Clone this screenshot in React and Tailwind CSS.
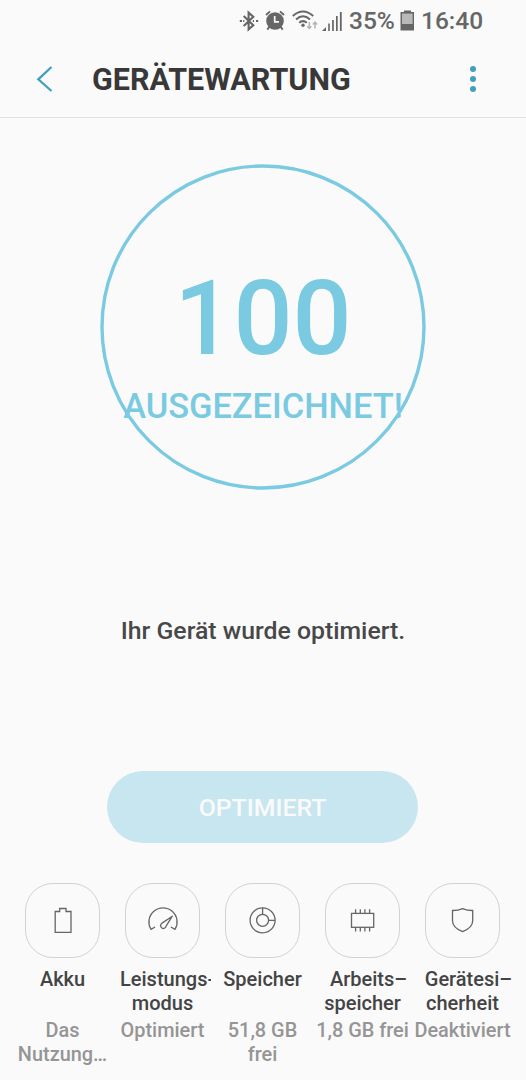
const BluetoothIcon = () => (
  <svg width="20" height="22" viewBox="0 0 20 22" fill="none" stroke="#666" strokeWidth="2.1">
    <path d="M4.7 6 L14.3 15.2 L9.6 19.4 V2.6 L14.3 6.8 L4.7 16" />
    <path d="M0.8 11 H3 M4.2 11 H5.4 M13.8 11 H15 M17 11 H19.2" strokeWidth="2.2" />
  </svg>
);

const AlarmIcon = () => (
  <svg width="20" height="21" viewBox="0 0 20 21">
    <circle cx="10" cy="11" r="8.8" fill="#666" />
    <path
      d="M1 5 L5 1.4 M15 1.4 L19 5 M4.5 16.5 L2.3 19.6 M15.5 16.5 L17.7 19.6"
      stroke="#666"
      strokeWidth="1.9"
      fill="none"
    />
    <path d="M9.7 6 V11.8 H14" stroke="#fafafa" strokeWidth="1.7" fill="none" />
  </svg>
);

const WifiIcon = () => (
  <svg width="27" height="21" viewBox="0 0 27 21" fill="none" stroke="#666" strokeWidth="2">
    <path d="M0.8 6 Q11 -3 21.2 6" />
    <path d="M4 9.4 Q11 3.2 18 9.4" />
    <path d="M7.2 12.8 Q11 9.4 14.8 12.8" />
    <circle cx="11" cy="15.3" r="1.7" fill="#666" stroke="none" />
    <path
      d="M17.3 12 V18.3 M15.2 16.2 L17.3 18.5 L19.4 16.2 M23 18.5 V12.3 M20.9 14.4 L23 12.2 L25.1 14.4"
      stroke="#b4b4b4"
      strokeWidth="1.5"
    />
  </svg>
);

const SignalIcon = () => (
  <svg width="20" height="20" viewBox="0 0 20 20" fill="#666">
    <path d="M0 20 L4 16 V20 Z" />
    <rect x="6.2" y="12.5" width="1.6" height="7.5" />
    <rect x="10.1" y="9" width="1.7" height="11" />
    <rect x="14" y="5" width="1.7" height="15" />
    <rect x="17.9" y="1" width="1.8" height="19" />
  </svg>
);

const BatteryStatusIcon = () => (
  <svg width="15" height="21" viewBox="0 0 15 21">
    <path d="M0.5 2 H4 V0.5 H11 V2 H14 V20.5 H0.5 Z" fill="#666" />
    <rect x="2" y="3.6" width="10.6" height="10.4" fill="#b9b9b9" />
  </svg>
);

const BatteryIcon = () => (
  <svg width="36" height="36" viewBox="0 0 36 36" fill="none" stroke="#666" strokeWidth="1.3">
    <path d="M10.2 9.5 H14.7 V6.5 H21 V9.5 H26 V30.3 H10.2 Z" />
  </svg>
);

const GaugeIcon = () => (
  <svg width="36" height="36" viewBox="0 0 36 36" fill="none" stroke="#666" strokeWidth="1.3" strokeLinecap="round" strokeLinejoin="round">
    <path d="M9.6 25.2 L6 27.4 A14.1 14.1 0 1 1 30 27.4 L26.3 25.2" />
    <path d="M27.3 14.2 L21.1 24.2 A2.8 2.8 0 1 1 16.7 21.4 Z" />
  </svg>
);

const StorageIcon = () => (
  <svg width="36" height="36" viewBox="0 0 36 36" fill="none" stroke="#666" strokeWidth="1.3">
    <circle cx="17.6" cy="18.3" r="12.5" />
    <circle cx="17.6" cy="18.3" r="6" />
    <path d="M17.6 5.8 V12.3 M23.6 18.3 H30.1" />
  </svg>
);

const MemoryIcon = () => (
  <svg width="36" height="36" viewBox="0 0 36 36" fill="none" stroke="#666" strokeWidth="1.3">
    <rect x="6.5" y="11.4" width="22.2" height="13.9" />
    <path d="M10.6 7.2 V11.2 M15.3 7.2 V11.2 M19.9 7.2 V11.2 M24.6 7.2 V11.2 M10.6 25.3 V29.6 M15.3 25.3 V29.6 M19.9 25.3 V29.6 M24.6 25.3 V29.6" />
  </svg>
);

const ShieldIcon = () => (
  <svg width="36" height="36" viewBox="0 0 36 36" fill="none" stroke="#666" strokeWidth="1.3">
    <path d="M17.6 6.6 Q13 8.6 7.5 8.5 V18.8 C7.5 23.8 11.6 27.3 17.6 29.6 C23.6 27.3 27.7 23.8 27.7 18.8 V8.5 Q22.2 8.6 17.6 6.6 Z" />
  </svg>
);

const items = [
  { icon: <BatteryIcon />, title: ["Akku"], info: ["Das", "Nutzung…"] },
  { icon: <GaugeIcon />, title: ["Leistungs-", "modus"], info: ["Optimiert"], clipped: true },
  { icon: <StorageIcon />, title: ["Speicher"], info: ["51,8 GB", "frei"] },
  { icon: <MemoryIcon />, title: ["Arbeits–", "speicher"], info: ["1,8 GB frei"], hanging: true },
  { icon: <ShieldIcon />, title: ["Gerätesi–", "cherheit"], info: ["Deaktiviert"], hanging: true },
];

const StatusBar = () => (
  <div className="flex h-10 items-center pl-[239px] pt-[1px] text-[24.5px] font-medium leading-none text-[#666]">
    <BluetoothIcon />
    <div className="ml-[6px]"><AlarmIcon /></div>
    <div className="ml-[7px]"><WifiIcon /></div>
    <div className="ml-[3px]"><SignalIcon /></div>
    <span className="ml-[7px] w-[46px] whitespace-nowrap pt-[2px]">35%</span>
    <div className="ml-[5px]"><BatteryStatusIcon /></div>
    <span className="ml-[6px] whitespace-nowrap pt-[2px]">16:40</span>
  </div>
);

const Header = () => (
  <header className="flex h-[78px] items-center border-b border-[#e1e1e1]">
    <button className="ml-[36px]" aria-label="Zurück">
      <svg width="18" height="28" viewBox="0 0 18 28" fill="none" stroke="#419fc0" strokeWidth="2.3">
        <path d="M15.5 2 L2.3 14.3 L15.5 26" />
      </svg>
    </button>
    <h1 className="ml-[38px] flex-1 pt-[4px] text-[30.5px] font-bold leading-none text-[#383838]">
      GERÄTEWARTUNG
    </h1>
    <button className="mr-[50px] flex flex-col gap-1" aria-label="Menü">
      <span className="size-[6px] rounded-full bg-[#419fc0]" />
      <span className="size-[6px] rounded-full bg-[#419fc0]" />
      <span className="size-[6px] rounded-full bg-[#419fc0]" />
    </button>
  </header>
);

const Score = () => (
  <div className="mt-[46px] grid h-[326px] place-items-center text-[#7acae1]">
    <svg className="col-start-1 row-start-1" width="326" height="326" viewBox="0 0 326 326">
      <circle cx="163" cy="163" r="161" fill="none" stroke="currentColor" strokeWidth="3.4" />
    </svg>
    <div className="col-start-1 row-start-1 flex flex-col items-center pt-[38px] font-medium">
      <span className="text-[104px] leading-[104px]">100</span>
      <span className="mt-[15px] whitespace-nowrap text-[34.4px] leading-[40px]">AUSGEZEICHNET!</span>
    </div>
  </div>
);

const Item = ({ icon, title, info, clipped, hanging }) => (
  <div className="flex w-[100px] flex-col items-center text-center text-[20px] font-medium leading-[23.5px]">
    <div className="flex size-[75px] items-center justify-center rounded-[28px] border border-[#d2d2d2] pb-px">
      {icon}
    </div>
    <div className="mt-[10px] h-[47px] whitespace-nowrap text-[#444]">
      <div className={clipped ? "ml-[6px] w-[91px] overflow-hidden text-left" : hanging ? "pl-3" : ""}>
        {title[0]}
      </div>
      <div>{title[1]}</div>
    </div>
    <div className="mt-1 whitespace-nowrap text-[19.9px] text-[#959595]">
      {info.map((line) => (
        <div key={line}>{line}</div>
      ))}
    </div>
  </div>
);

export default function App() {
  return (
    <div className="h-[1080px] w-[526px] overflow-hidden bg-[#fafafa] font-[Roboto,sans-serif]">
      <StatusBar />
      <Header />
      <Score />

      <p className="mt-[125px] text-center text-[24.8px] font-medium leading-8 text-[#484848]">
        Ihr Gerät wurde optimiert.
      </p>

      <div className="mt-[124px] flex justify-center pr-px">
        <button className="h-[72px] w-[311px] rounded-full bg-[#c8e6f0] pt-[2px] text-[24.8px] font-medium text-[#fafafa]">
          OPTIMIERT
        </button>
      </div>

      <div className="mt-[40px] flex justify-center pr-px">
        {items.map((item) => (
          <Item key={item.title[0]} {...item} />
        ))}
      </div>
    </div>
  );
}
